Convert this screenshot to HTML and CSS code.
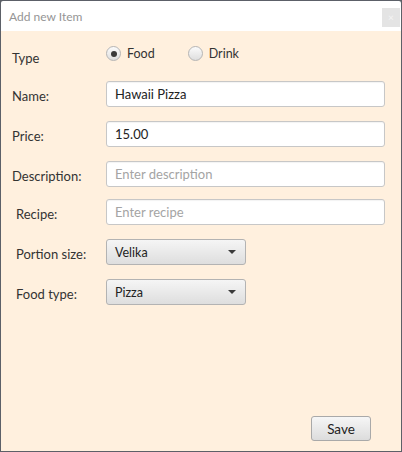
FILE: index.html
```html
<!DOCTYPE html>
<html>
<head>
<meta charset="utf-8">
<link rel="stylesheet" href="styles.css">
</head>
<body>
<div class="window">
  <div class="titlebar">
    <span class="title">Add new Item</span>
    <span class="close">×</span>
  </div>
  <div class="content">
    <div class="row row-type">
      <span class="label">Type</span>
      <div class="radios">
        <span class="radio"><span class="dot checked"></span>Food</span>
        <span class="radio"><span class="dot"></span>Drink</span>
      </div>
    </div>
    <div class="row">
      <span class="label">Name:</span>
      <div class="field">Hawaii Pizza</div>
    </div>
    <div class="row">
      <span class="label">Price:</span>
      <div class="field">15.00</div>
    </div>
    <div class="row row-tight">
      <span class="label">Description:</span>
      <div class="field placeholder">Enter description</div>
    </div>
    <div class="row">
      <span class="label indent">Recipe:</span>
      <div class="field placeholder">Enter recipe</div>
    </div>
    <div class="row">
      <span class="label indent">Portion size:</span>
      <div class="combo"><span>Velika</span><span class="arrow"></span></div>
    </div>
    <div class="row">
      <span class="label indent">Food type:</span>
      <div class="combo"><span>Pizza</span><span class="arrow"></span></div>
    </div>
    <div class="footer">
      <button class="btn">Save</button>
    </div>
  </div>
</div>
</body>
</html>
```
FILE: styles.css
```css
html, body {
  margin: 0;
  padding: 0;
  background: #5c6068;
}
body {
  font-family: Lato, "Open Sans", sans-serif;
  font-size: 13px;
  color: #333;
}
.window {
  width: 400px;
  height: 450px;
  border: 1px solid #5c6068;
  border-radius: 3px 3px 0 0;
  display: flex;
  flex-direction: column;
  overflow: hidden;
}
.titlebar {
  height: 30px;
  background: #fff;
  display: flex;
  align-items: flex-start;
  justify-content: space-between;
}
.title {
  color: #959595;
  font-size: 12px;
  margin: 8px 0 0 8px;
  line-height: 16px;
}
.close {
  width: 18px;
  height: 19px;
  margin: 7px 1px 0 0;
  background: #e4e4e4;
  color: #f4f4f4;
  font-size: 10px;
  line-height: 19px;
  text-align: center;
}
.content {
  flex: 1;
  background: #fff0de;
  padding: 15px 16px 0 11px;
  display: flex;
  flex-direction: column;
}
.row {
  display: grid;
  grid-template-columns: 94px 1fr;
  align-items: center;
  margin-bottom: 14px;
}
.row-tight {
  margin-bottom: 12px;
}
.row-type {
  align-items: start;
  margin-bottom: 15px;
}
.row-type .label {
  margin-top: 1px;
}
.label {
  line-height: 16px;
  color: #333;
  padding-top: 3px;
}
.indent {
  padding-left: 4px;
}
.radios {
  display: flex;
  gap: 33px;
}
.radio {
  display: flex;
  align-items: center;
  gap: 6px;
  font-size: 12.5px;
  line-height: 15px;
}
.dot {
  width: 13px;
  height: 13px;
  border-radius: 50%;
  border: 1px solid #b5b5b5;
  background: linear-gradient(#fbfbfb, #dedede);
  display: flex;
  align-items: center;
  justify-content: center;
}
.dot.checked::after {
  content: "";
  width: 6px;
  height: 6px;
  border-radius: 50%;
  background: #3a3a3a;
}
.field {
  height: 24px;
  border: 1px solid #c7c7c7;
  border-radius: 3px;
  background: #fff;
  box-shadow: inset 0 1px 1px rgba(0,0,0,0.05);
  padding-left: 8px;
  line-height: 24px;
  color: #222;
}
.placeholder {
  color: #a4a4a4;
}
.combo {
  height: 24px;
  border: 1px solid #b3b3b3;
  border-radius: 3px;
  background: linear-gradient(#f5f5f5, #dedede);
  display: flex;
  align-items: center;
  justify-content: space-between;
  padding: 0 9px 0 8px;
  box-sizing: content-box;
  width: 121px;
  font-size: 12.5px;
  color: #222;
}
.arrow {
  width: 0;
  height: 0;
  border-left: 4px solid transparent;
  border-right: 4px solid transparent;
  border-top: 4px solid #3a3a3a;
}
.footer {
  margin-top: auto;
  display: flex;
  justify-content: flex-end;
  padding: 0 14px 10px 0;
}
.btn {
  width: 60px;
  height: 25px;
  border: 1px solid #a9a9a9;
  border-radius: 3px;
  background: linear-gradient(#f6f6f6, #dcdcdc);
  font-family: inherit;
  font-size: 13.5px;
  color: #222;
  padding: 0;
}
```
